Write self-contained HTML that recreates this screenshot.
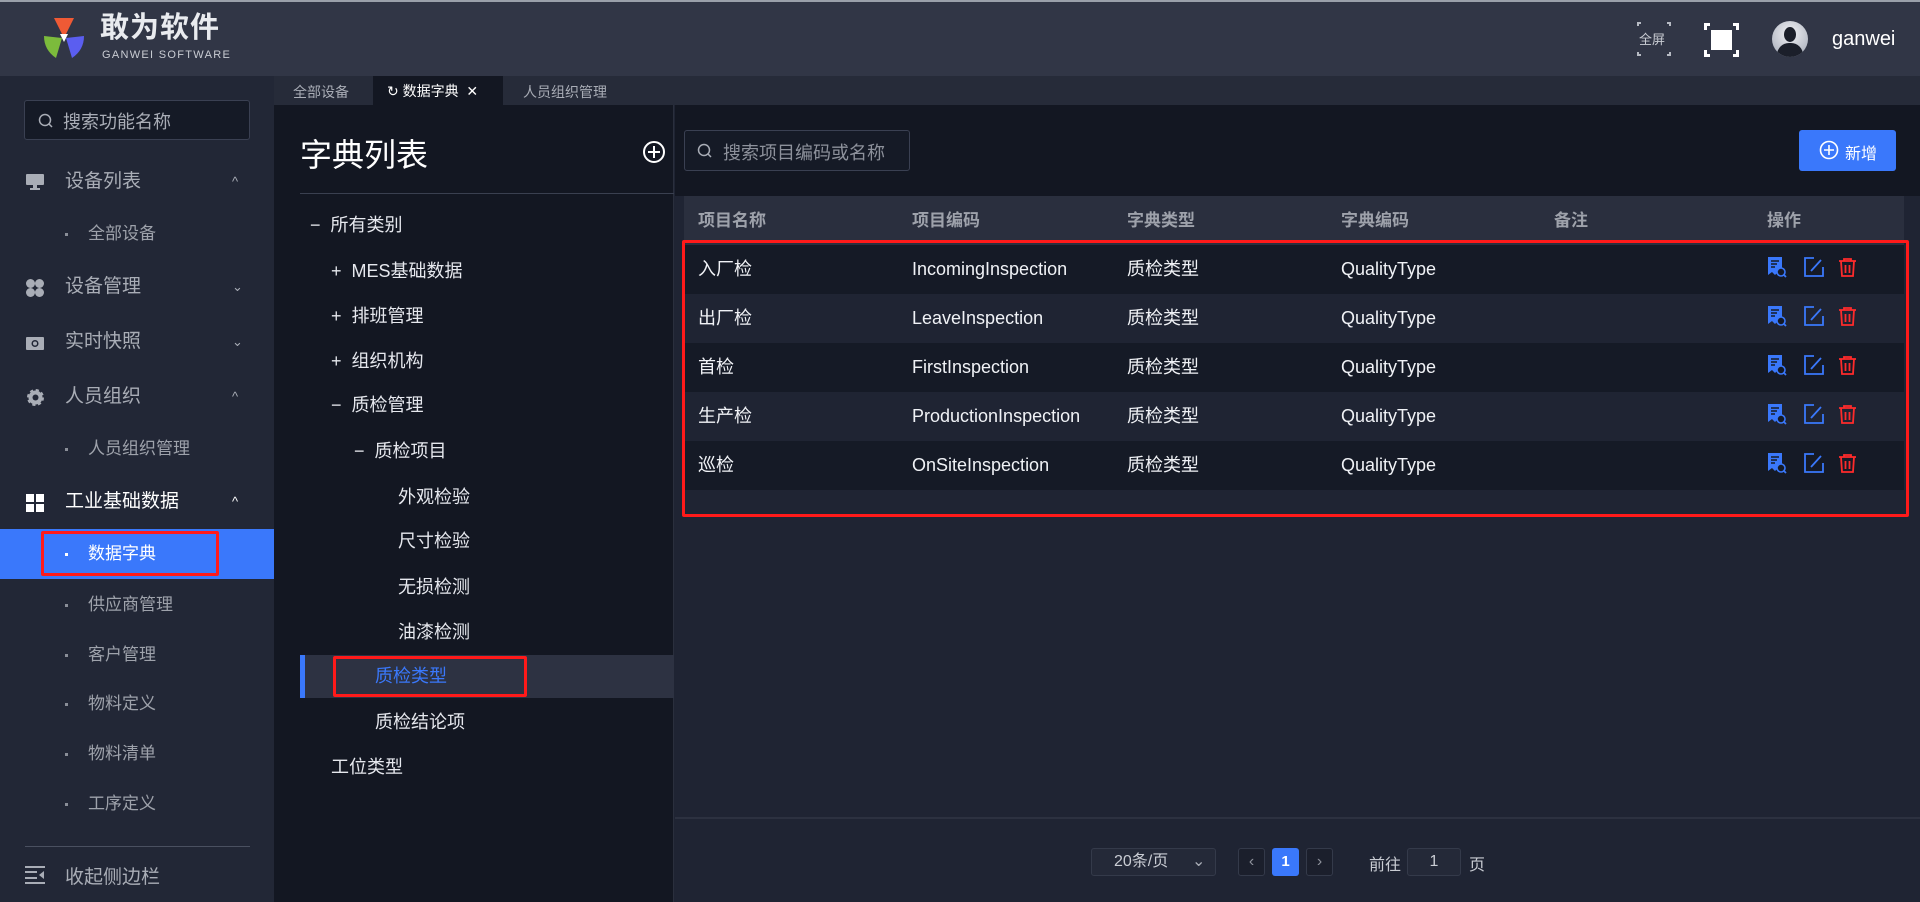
<!DOCTYPE html>
<html><head><meta charset="utf-8"><style>
*{margin:0;padding:0;box-sizing:border-box}
body{width:1920px;height:902px;overflow:hidden;background:#1f2433;font-family:"Liberation Sans","Noto Sans CJK SC",sans-serif;position:relative;color:#e6e8ee}
.a{position:absolute}
.hdr{left:0;top:0;width:1920px;height:76px;background:#313646;border-top:2px solid #9aa0aa}
.sb{left:0;top:76px;width:274px;height:826px;background:#222736}
.mi{position:absolute;left:0;width:274px;height:50px;line-height:50px;font-size:19px;color:#a9adb6}
.mi .t{position:absolute;left:65px}
.mi .ar{position:absolute;left:232px;top:0;font-size:13px;color:#a9adb6}
.si{position:absolute;left:0;width:274px;height:50px;line-height:50px;font-size:17px;color:#9ea2ab}
.si .d{position:absolute;left:65px;top:24px;width:3px;height:3px;background:#8a8e98}
.si .t{position:absolute;left:88px}
.tabs{left:274px;top:76px;width:1646px;height:29px;background:#262b39;font-size:14px;color:#a9adb6}
.tree{left:274px;top:105px;width:400px;height:797px;background:#131722;border-right:1px solid #2a2f3d}
.ti{position:absolute;font-size:18px;color:#e6e8ee;line-height:30px}
.main{left:675px;top:105px;width:1245px;height:797px;background:#1f2433}
.row{position:absolute;left:9px;width:1220px;height:49px;line-height:49px;font-size:18px;color:#f0f2f6}
.row span{position:absolute}
.c1{left:14px}.c2{left:228px}.c3{left:443px}.c4{left:657px}.c5{left:870px}.c6{left:1083px}
</style></head><body>
<div class="a hdr">
 <svg class="a" style="left:40px;top:14px" width="48" height="46" viewBox="0 0 48 46">
  <path d="M14 2 L34 2 L24 22 Z" fill="#ef5a35"/>
  <path d="M4 20 L22 22 L16 42 Q4 34 4 20Z" fill="#7cbb3c"/>
  <path d="M26 22 L44 20 Q44 34 32 42 Z" fill="#5b5ef0"/>
  <path d="M20 18 L28 18 L24 26Z" fill="#fff"/>
 </svg>
 <div class="a" style="left:100px;top:8px;font-size:29px;line-height:36px;font-weight:bold;color:#e9ebef;letter-spacing:1px">敢为软件</div>
 <div class="a" style="left:102px;top:47px;font-size:11px;line-height:12px;color:#c9ccd3;letter-spacing:1.3px">GANWEI SOFTWARE</div>
 <div class="a" style="left:1637px;top:20px;width:34px;height:34px;border:2px solid #b6bac3;"></div>
 <div class="a" style="left:1641px;top:16px;width:26px;height:42px;background:#313646"></div>
 <div class="a" style="left:1633px;top:24px;width:42px;height:26px;background:#313646"></div>
 <div class="a" style="left:1639px;top:27px;font-size:13px;color:#c9ccd3">全屏</div>
 <div class="a" style="left:1704px;top:21px;width:35px;height:34px;border:3px solid #fff"></div>
 <div class="a" style="left:1710px;top:17px;width:23px;height:42px;background:#313646"></div>
 <div class="a" style="left:1700px;top:28px;width:43px;height:20px;background:#313646"></div>
 <div class="a" style="left:1711px;top:28px;width:21px;height:20px;background:#fff"></div>
 <div class="a" style="left:1772px;top:19px;width:36px;height:36px;border-radius:50%;background:radial-gradient(circle at 50% 35%,#f2f3f6,#9ea4b2);overflow:hidden">
  <div class="a" style="left:12px;top:6px;width:12px;height:15px;border-radius:50%;background:#1b1f2a"></div>
  <div class="a" style="left:5px;top:22px;width:26px;height:16px;border-radius:12px 12px 0 0;background:#1b1f2a"></div>
 </div>
 <div class="a" style="left:1832px;top:26px;font-size:20px;color:#fff">ganwei</div>
</div>

<div class="a sb">
 <div class="a" style="left:24px;top:24px;width:226px;height:40px;border:1px solid #3a4052;border-radius:3px;background:#151a26"></div>
 <svg class="a" style="left:38px;top:37px" width="16" height="16"><circle cx="7" cy="7" r="5.5" stroke="#a9adb6" stroke-width="1.5" fill="none"/><path d="M11 11l3 3" stroke="#a9adb6" stroke-width="1.5"/></svg>
 <div class="a" style="left:63px;top:32px;font-size:18px;color:#a9adb6">搜索功能名称</div>
 <div class="mi" style="top:81px"><svg class="a" style="left:26px;top:17px" width="18" height="16"><rect x="0" y="0" width="18" height="11" rx="1" fill="#a9adb6"/><rect x="7" y="11" width="4" height="3" fill="#a9adb6"/><rect x="4" y="14" width="10" height="2" fill="#a9adb6"/></svg><span class="t">设备列表</span><span class="ar">^</span></div>
 <div class="si" style="top:133px"><i class="d"></i><span class="t">全部设备</span></div>
 <div class="mi" style="top:186px"><svg class="a" style="left:26px;top:17px" width="18" height="18"><circle cx="4.5" cy="4.5" r="4.5" fill="#a9adb6"/><circle cx="13.5" cy="4.5" r="4.5" fill="#a9adb6"/><circle cx="4.5" cy="13.5" r="4.5" fill="#a9adb6"/><circle cx="13.5" cy="13.5" r="4.5" fill="#a9adb6"/></svg><span class="t">设备管理</span><span class="ar">⌄</span></div>
 <div class="mi" style="top:241px"><svg class="a" style="left:26px;top:18px" width="18" height="15"><rect x="0" y="2" width="18" height="13" rx="1" fill="#a9adb6"/><circle cx="9" cy="8.5" r="3.5" fill="#222736"/><circle cx="9" cy="8.5" r="2" fill="#a9adb6"/></svg><span class="t">实时快照</span><span class="ar">⌄</span></div>
 <div class="mi" style="top:296px"><svg class="a" style="left:27px;top:17px" width="17" height="17"><circle cx="8.5" cy="8.5" r="7" fill="#a9adb6" stroke="#a9adb6" stroke-width="3" stroke-dasharray="3 2.5"/><circle cx="8.5" cy="8.5" r="3" fill="#222736"/></svg><span class="t">人员组织</span><span class="ar">^</span></div>
 <div class="si" style="top:348px"><i class="d"></i><span class="t">人员组织管理</span></div>
 <div class="mi" style="top:401px;color:#fff"><svg class="a" style="left:26px;top:17px" width="18" height="18"><rect x="0" y="0" width="8" height="8" fill="#fff"/><rect x="10" y="0" width="8" height="8" fill="#fff"/><rect x="0" y="10" width="8" height="8" fill="#fff"/><rect x="10" y="10" width="8" height="8" fill="#fff"/></svg><span class="t">工业基础数据</span><span class="ar" style="color:#fff">^</span></div>
 <div class="si" style="top:453px;background:#3a78fb;color:#fff"><i class="d" style="background:#fff"></i><span class="t">数据字典</span></div>
 <div class="a" style="left:41px;top:455px;width:178px;height:45px;border:3px solid #ff1a1a;border-radius:2px"></div>
 <div class="si" style="top:504px"><i class="d"></i><span class="t">供应商管理</span></div>
 <div class="si" style="top:554px"><i class="d"></i><span class="t">客户管理</span></div>
 <div class="si" style="top:603px"><i class="d"></i><span class="t">物料定义</span></div>
 <div class="si" style="top:653px"><i class="d"></i><span class="t">物料清单</span></div>
 <div class="si" style="top:703px"><i class="d"></i><span class="t">工序定义</span></div>
 <div class="a" style="left:25px;top:770px;width:225px;height:1px;background:#4a5060"></div>
 <svg class="a" style="left:25px;top:790px" width="20" height="18"><path d="M0 1h20M0 6h12M0 12h12M0 17h20" stroke="#a9adb6" stroke-width="2"/><path d="M19 5l-5 4 5 4z" fill="#a9adb6"/></svg>
 <div class="a" style="left:65px;top:786px;font-size:19px;color:#a9adb6">收起侧边栏</div>
</div>

<div class="a tabs">
 <div class="a" style="left:19px;top:6px">全部设备</div>
 <div class="a" style="left:99px;top:0;width:130px;height:29px;background:#131722"></div>
 <div class="a" style="left:113px;top:5px;color:#fff">↻ 数据字典 &nbsp;✕</div>
 <div class="a" style="left:249px;top:6px">人员组织管理</div>
</div>

<div class="a tree">
 <div class="a" style="left:26px;top:25px;font-size:32px;color:#fff">字典列表</div>
 <svg class="a" style="left:368px;top:35px" width="24" height="24"><circle cx="12" cy="12" r="10" stroke="#fff" stroke-width="2" fill="none"/><path d="M12 6v12M6 12h12" stroke="#fff" stroke-width="2"/></svg>
 <div class="a" style="left:26px;top:88px;width:374px;height:1px;background:#3a4050"></div>
 <div class="ti" style="left:36px;top:105px">−&nbsp; 所有类别</div>
 <div class="ti" style="left:57px;top:151px">+&nbsp; MES基础数据</div>
 <div class="ti" style="left:57px;top:196px">+&nbsp; 排班管理</div>
 <div class="ti" style="left:57px;top:241px">+&nbsp; 组织机构</div>
 <div class="ti" style="left:57px;top:285px">−&nbsp; 质检管理</div>
 <div class="ti" style="left:80px;top:331px">−&nbsp; 质检项目</div>
 <div class="ti" style="left:124px;top:377px">外观检验</div>
 <div class="ti" style="left:124px;top:421px">尺寸检验</div>
 <div class="ti" style="left:124px;top:467px">无损检测</div>
 <div class="ti" style="left:124px;top:512px">油漆检测</div>
 <div class="a" style="left:26px;top:550px;width:374px;height:43px;background:#2d3242;border-left:5px solid #3a78fb"></div>
 <div class="ti" style="left:101px;top:556px;color:#3a78fb">质检类型</div>
 <div class="a" style="left:59px;top:551px;width:194px;height:41px;border:3px solid #ff1a1a;border-radius:2px"></div>
 <div class="ti" style="left:101px;top:602px">质检结论项</div>
 <div class="ti" style="left:57px;top:647px">工位类型</div>
</div>

<div class="a main">
 <div class="a" style="left:0;top:0;width:1245px;height:91px;background:#131722"></div>
 <div class="a" style="left:9px;top:25px;width:226px;height:41px;border:1px solid #3a4052;border-radius:3px;background:#151a26"></div>
 <svg class="a" style="left:22px;top:38px" width="16" height="16"><circle cx="7" cy="7" r="5.5" stroke="#a9adb6" stroke-width="1.5" fill="none"/><path d="M11 11l3 3" stroke="#a9adb6" stroke-width="1.5"/></svg>
 <div class="a" style="left:48px;top:34px;width:182px;overflow:hidden;white-space:nowrap;font-size:18px;color:#8d919b">搜索项目编码或名称</div>
 <div class="a" style="left:1124px;top:25px;width:97px;height:41px;background:#3a78fb;border-radius:3px"></div>
 <svg class="a" style="left:1144px;top:35px" width="20" height="20"><circle cx="10" cy="10" r="8.5" stroke="#fff" stroke-width="1.6" fill="none"/><path d="M10 5v10M5 10h10" stroke="#fff" stroke-width="1.6"/></svg>
 <div class="a" style="left:1170px;top:35px;font-size:16px;color:#fff">新增</div>
 <div class="row" style="top:91px;background:#2a2f3e;height:49px;color:#9ea2ab;font-weight:bold;font-size:17px"><span class="c1">项目名称</span><span class="c2">项目编码</span><span class="c3">字典类型</span><span class="c4">字典编码</span><span class="c5">备注</span><span class="c6">操作</span></div>
 <div class="row" style="top:140px;background:#151a26"><span class="c1">入厂检</span><span class="c2">IncomingInspection</span><span class="c3">质检类型</span><span class="c4">QualityType</span></div>
 <div class="row" style="top:189px;background:#1f2433"><span class="c1">出厂检</span><span class="c2">LeaveInspection</span><span class="c3">质检类型</span><span class="c4">QualityType</span></div>
 <div class="row" style="top:238px;background:#151a26"><span class="c1">首检</span><span class="c2">FirstInspection</span><span class="c3">质检类型</span><span class="c4">QualityType</span></div>
 <div class="row" style="top:287px;background:#1f2433"><span class="c1">生产检</span><span class="c2">ProductionInspection</span><span class="c3">质检类型</span><span class="c4">QualityType</span></div>
 <div class="row" style="top:336px;background:#151a26"><span class="c1">巡检</span><span class="c2">OnSiteInspection</span><span class="c3">质检类型</span><span class="c4">QualityType</span></div>
 <div class="a" style="left:7px;top:135px;width:1227px;height:277px;border:3px solid #ff1a1a;border-radius:2px"></div>
 <div class="a" style="left:0;top:712px;width:1245px;height:2px;background:#2c3140"></div>
 <div class="a" style="left:416px;top:743px;width:125px;height:28px;border:1px solid #343a4a;border-radius:3px;background:#242938;font-size:16px;color:#c9ccd3;line-height:26px;padding-left:22px">20条/页<span style="position:absolute;left:100px;color:#a9adb6">⌄</span></div>
 <div class="a" style="left:563px;top:743px;width:27px;height:28px;border:1px solid #343a4a;border-radius:3px;background:#1b1f2c;color:#8d919b;text-align:center;line-height:26px">‹</div>
 <div class="a" style="left:597px;top:743px;width:27px;height:28px;border-radius:3px;background:#3a78fb;color:#fff;text-align:center;line-height:28px;font-weight:bold;font-size:15px">1</div>
 <div class="a" style="left:631px;top:743px;width:27px;height:28px;border:1px solid #343a4a;border-radius:3px;background:#1b1f2c;color:#8d919b;text-align:center;line-height:26px">›</div>
 <div class="a" style="left:694px;top:746px;font-size:16px;color:#c9ccd3">前往</div>
 <div class="a" style="left:732px;top:743px;width:54px;height:28px;border:1px solid #343a4a;border-radius:3px;background:#242938;color:#c9ccd3;text-align:center;line-height:26px;font-size:16px">1</div>
 <div class="a" style="left:794px;top:746px;font-size:16px;color:#c9ccd3">页</div>
</div>
<svg class="a" style="left:0;top:0;pointer-events:none" width="1920" height="902">
 <defs>
  <g id="ic">
   <path d="M0 0h14v18l-4-3-3 3-3-3-4 3z" fill="#3a78fb"/>
   <path d="M3 4h8M3 7h6M3 10h4" stroke="#151a26" stroke-width="1.5"/>
   <circle cx="13" cy="15" r="4" fill="#151a26" stroke="#3a78fb" stroke-width="1.6"/><path d="M16 18l2 2" stroke="#3a78fb" stroke-width="1.8"/>
   <path d="M46 1h-9v18h18v-9" stroke="#3a78fb" stroke-width="1.8" fill="none"/><path d="M43 14l10-11" stroke="#3a78fb" stroke-width="1.8"/>
   <path d="M71 4h17M76 4v-2h7v2M73 4l1 15h11l1-15" stroke="#ff2b2b" stroke-width="1.8" fill="none"/><path d="M77.5 8v8M81.5 8v8" stroke="#ff2b2b" stroke-width="1.8"/>
  </g>
 </defs>
 <use href="#ic" x="1768" y="257"/>
 <use href="#ic" x="1768" y="306"/>
 <use href="#ic" x="1768" y="355"/>
 <use href="#ic" x="1768" y="404"/>
 <use href="#ic" x="1768" y="453"/>
</svg>
</body></html>
